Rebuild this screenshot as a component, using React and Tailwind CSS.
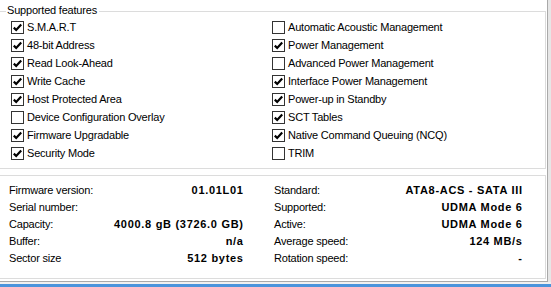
import React from "react";

const left = [
  ["S.M.A.R.T", true],
  ["48-bit Address", true],
  ["Read Look-Ahead", true],
  ["Write Cache", true],
  ["Host Protected Area", true],
  ["Device Configuration Overlay", false],
  ["Firmware Upgradable", true],
  ["Security Mode", true],
];

const right = [
  ["Automatic Acoustic Management", false],
  ["Power Management", true],
  ["Advanced Power Management", false],
  ["Interface Power Management", true],
  ["Power-up in Standby", true],
  ["SCT Tables", true],
  ["Native Command Queuing (NCQ)", true],
  ["TRIM", false],
];

const infoLeft = [
  ["Firmware version:", "01.01L01"],
  ["Serial number:", ""],
  ["Capacity:", "4000.8 gB (3726.0 GB)"],
  ["Buffer:", "n/a"],
  ["Sector size", "512 bytes"],
];

const infoRight = [
  ["Standard:", "ATA8-ACS - SATA III"],
  ["Supported:", "UDMA Mode 6"],
  ["Active:", "UDMA Mode 6"],
  ["Average speed:", "124 MB/s"],
  ["Rotation speed:", "-"],
];

function Check({ label, checked }) {
  return (
    <div className="flex items-center h-[18px] gap-[3px]">
      <div className="w-[13px] h-[13px] border border-[#333333] bg-white flex items-center justify-center shrink-0">
        {checked && (
          <svg width="11" height="11" viewBox="0 0 11 11">
            <path d="M1.8 5.6 L4.2 8 L9.2 2.6" fill="none" stroke="#000" strokeWidth="2.2" />
          </svg>
        )}
      </div>
      <span className="whitespace-nowrap tracking-[-0.2px]">{label}</span>
    </div>
  );
}

function InfoCol({ rows }) {
  return (
    <div className="flex flex-col">
      {rows.map(([k, v]) => (
        <div key={k} className="flex justify-between items-center h-[17px]">
          <span className="tracking-[-0.2px]">{k}</span>
          <span className="font-bold tracking-[0.7px] mr-[-0.7px]">{v}</span>
        </div>
      ))}
    </div>
  );
}

export default function App() {
  return (
    <div
      className="w-[551px] h-[287px] bg-white overflow-hidden flex flex-col text-[11px] text-black leading-none"
      style={{ fontFamily: '"Liberation Sans", Arial, sans-serif' }}
    >
      <div className="flex h-[282px]">
        <div className="w-[548px] h-[282px] border-r border-b border-[#a9a9a9] flex flex-col">
          <div className="relative mt-[11px] ml-[-2px] w-[548px] h-[158px] border border-[#dcdcdc]">
            <span className="absolute left-[7px] top-[-7px] bg-white pr-[2px] pl-[1px] tracking-[-0.2px]">Supported features</span>
            <div className="grid grid-cols-[261px_1fr] pl-[12px] pt-[6px]">
              <div className="flex flex-col">
                {left.map(([l, c]) => (
                  <Check key={l} label={l} checked={c} />
                ))}
              </div>
              <div className="flex flex-col">
                {right.map(([l, c]) => (
                  <Check key={l} label={l} checked={c} />
                ))}
              </div>
            </div>
          </div>
          <div className="mt-[6px] ml-[-2px] w-[548px] h-[104px] border border-[#dcdcdc] pt-[6px] pl-[10px] grid grid-cols-[234px_248px] gap-x-[31px]">
            <InfoCol rows={infoLeft} />
            <InfoCol rows={infoRight} />
          </div>
        </div>
        <div className="flex-1 bg-[#e6e6e6]" />
      </div>
      <div className="h-[2px] bg-[#f0f0f0]" />
      <div className="flex-1 bg-[#4a94dc]" />
    </div>
  );
}
